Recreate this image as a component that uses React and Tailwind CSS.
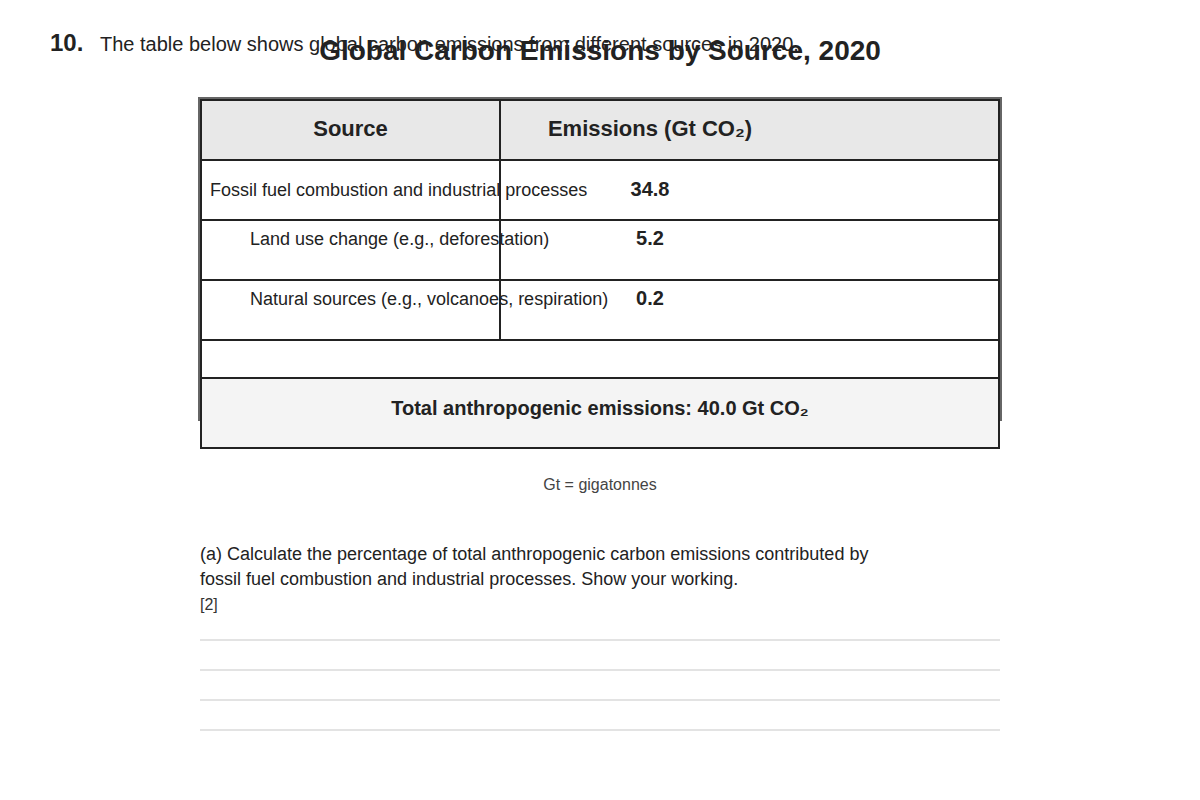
export default function App() {
  const rows = [
    { source: "Land use change (e.g., deforestation)", value: "5.2" },
    { source: "Natural sources (e.g., volcanoes, respiration)", value: "0.2" },
  ];

  return (
    <div className="min-h-screen bg-white px-[50px] pt-[29px] font-['Liberation_Sans',Arial,sans-serif] text-[#222]">
      {/* Question heading */}
      <div className="flex items-baseline leading-[28px]">
        <span className="w-[50px] text-[24px] font-bold">10.</span>
        <p className="text-[20px]">
          The table below shows global carbon emissions from different sources in 2020.
        </p>
      </div>
      <h2 className="-mt-[24px] text-center text-[28px] font-bold leading-[34px]">
        Global Carbon Emissions by Source, 2020
      </h2>

      {/* Table */}
      <div className="mx-auto mt-[29px] h-[324px] w-[804px] border-2 border-[#666]">
        <div className="flex h-[62px] border-2 border-[#222] bg-[#e8e8e8] text-[22px] font-bold">
          <div className="flex w-[297px] shrink-0 items-center justify-center pb-[4px]">Source</div>
          <div className="relative flex flex-1 items-center border-l-2 border-[#222] pb-[4px]">
            <span className="w-[298px] text-center">Emissions (Gt CO₂)</span>
          </div>
        </div>

        <div className="flex h-[60px] border-x-2 border-b-2 border-[#222]">
          <div className="flex w-[297px] shrink-0 items-center pl-[8px] text-[18px]">
            <span className="whitespace-nowrap">Fossil fuel combustion and industrial processes</span>
          </div>
          <div className="relative flex flex-1 items-center border-l-2 border-[#222] pb-[2px]">
            <span className="w-[298px] text-center text-[20px] font-bold">34.8</span>
          </div>
        </div>

        {rows.map((row) => (
          <div key={row.value} className="flex h-[60px] border-x-2 border-b-2 border-[#222]">
            <div className="w-[297px] shrink-0 pl-[48px] pt-[5px] text-[18px] leading-[26px]">
              <span className="whitespace-nowrap">{row.source}</span>
            </div>
            <div className="relative flex-1 border-l-2 border-[#222] pt-[3px]">
              <span className="block w-[298px] text-center text-[20px] font-bold leading-[28px]">
                {row.value}
              </span>
            </div>
          </div>
        ))}

        <div className="h-[36px] border-x-2 border-[#222]" />
        <div className="h-[72px] border-2 border-[#222] bg-[#f4f4f4] pt-[15px] text-center text-[20px] font-bold leading-[28px]">
          Total anthropogenic emissions: 40.0 Gt CO₂
        </div>
      </div>

      <p className="mt-[54px] text-center text-[16px] leading-[20px] text-[#444]">Gt = gigatonnes</p>

      {/* Part (a) */}
      <div className="mx-auto mt-[47px] w-[800px]">
        <p className="w-[700px] text-[18px] leading-[25px] text-[#222]">
          (a) Calculate the percentage of total anthropogenic carbon emissions contributed by fossil fuel
          combustion and industrial processes. Show your working.
        </p>
        <p className="mt-[2px] text-[16px] leading-[22px] text-[#333]">[2]</p>
        <div className="mt-[23px]">
          {[0, 1, 2, 3].map((i) => (
            <div key={i} className="h-[30px] border-t-2 border-[#e3e3e3]" />
          ))}
        </div>
      </div>
    </div>
  );
}
